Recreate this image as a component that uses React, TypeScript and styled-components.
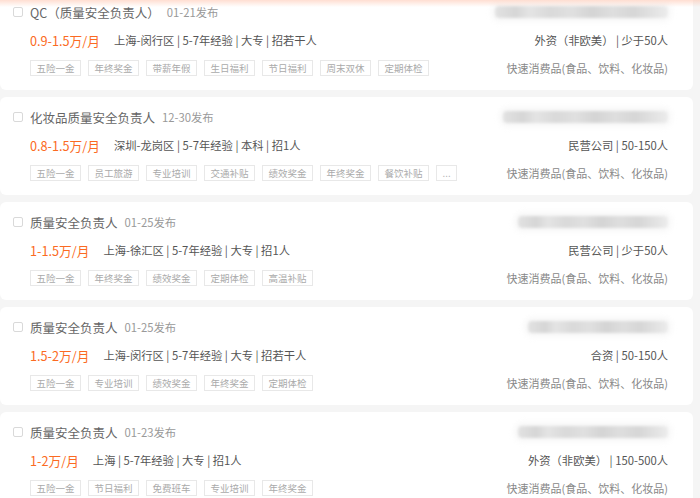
import React from "react";
import styled, { createGlobalStyle } from "styled-components";

const Global = createGlobalStyle`
  html, body { margin: 0; padding: 0; background: #f5f5f5; }
  body { font-family: "Noto Sans CJK SC", "Noto Sans", sans-serif; overflow: hidden; }
`;

const Page = styled.div`
  position: relative;
  width: 700px;
  height: 498px;
  overflow: hidden;
  background: #f5f5f5;
`;

const TopGlow = styled.div`
  position: absolute;
  left: 0;
  right: 0;
  top: 0;
  height: 7px;
  background: linear-gradient(to bottom, rgba(255, 190, 165, 0.5), rgba(255, 220, 205, 0));
  pointer-events: none;
  z-index: 2;
`;

const List = styled.div`
  display: flex;
  flex-direction: column;
  gap: 7px;
  margin-top: -8px;
  padding-right: 7px;
`;

const Card = styled.div`
  height: 98px;
  box-sizing: border-box;
  background: #fff;
  border-radius: 6px;
  padding: 6px 25px 8px 13px;
  display: flex;
  justify-content: space-between;
`;

const Left = styled.div`
  display: flex;
  flex-direction: column;
`;

const Right = styled.div`
  display: flex;
  flex-direction: column;
  align-items: flex-end;
`;

const Row = styled.div<{ $indent?: boolean }>`
  height: 28px;
  display: flex;
  align-items: center;
  padding-left: ${(p) => (p.$indent ? "17px" : "0")};
  white-space: nowrap;
`;

const Check = styled.span`
  width: 10px;
  height: 10px;
  box-sizing: border-box;
  border: 1px solid #d9d9d9;
  border-radius: 2px;
  margin-right: 7px;
  flex: none;
`;

const Title = styled.span`
  font-size: 12.5px;
  color: #666;
`;

const DateText = styled.span`
  font-size: 11.3px;
  color: #999;
  margin-left: 7px;
`;

const Salary = styled.span`
  font-size: 12.7px;
  color: #fb6a22;
  margin-right: 14px;
`;

const Info = styled.span`
  font-size: 11.3px;
  color: #555;
`;

const Tags = styled.div`
  display: flex;
  gap: 7px;
`;

const Tag = styled.span`
  height: 16px;
  box-sizing: border-box;
  padding: 0 5.5px;
  border: 1px solid #e8e8e8;
  font-size: 9.5px;
  line-height: 14px;
  color: #aaa;
  display: inline-flex;
  align-items: center;
`;

const Blur = styled.div<{ $w: number }>`
  width: ${(p) => p.$w}px;
  height: 12px;
  border-radius: 4px;
  background: linear-gradient(
    to right,
    #e2e2e2 0%,
    #d6d6d6 12%,
    #e4e4e4 20%,
    #d9d9d9 32%,
    #e0e0e0 44%,
    #d4d4d4 56%,
    #dedede 68%,
    #d6d6d6 80%,
    #e3e3e3 92%,
    #ececec 100%
  );
  filter: blur(1.5px);
  box-shadow: 0 0 6px 4px #f8f8f8;
`;

const Company = styled.span`
  font-size: 11.3px;
  color: #555;
`;

const Industry = styled.span`
  font-size: 11px;
  color: #888;
`;

type Job = {
  title: string;
  date: string;
  salary: string;
  info: string;
  tags: string[];
  blur: number;
  company: string;
  industry: string;
};

const jobs: Job[] = [
  {
    title: "QC（质量安全负责人）",
    date: "01-21发布",
    salary: "0.9-1.5万/月",
    info: "上海-闵行区 | 5-7年经验 | 大专 | 招若干人",
    tags: ["五险一金", "年终奖金", "带薪年假", "生日福利", "节日福利", "周末双休", "定期体检"],
    blur: 173,
    company: "外资（非欧美） | 少于50人",
    industry: "快速消费品(食品、饮料、化妆品)",
  },
  {
    title: "化妆品质量安全负责人",
    date: "12-30发布",
    salary: "0.8-1.5万/月",
    info: "深圳-龙岗区 | 5-7年经验 | 本科 | 招1人",
    tags: ["五险一金", "员工旅游", "专业培训", "交通补贴", "绩效奖金", "年终奖金", "餐饮补贴", "..."],
    blur: 165,
    company: "民营公司 | 50-150人",
    industry: "快速消费品(食品、饮料、化妆品)",
  },
  {
    title: "质量安全负责人",
    date: "01-25发布",
    salary: "1-1.5万/月",
    info: "上海-徐汇区 | 5-7年经验 | 大专 | 招1人",
    tags: ["五险一金", "年终奖金", "绩效奖金", "定期体检", "高温补贴"],
    blur: 150,
    company: "民营公司 | 少于50人",
    industry: "快速消费品(食品、饮料、化妆品)",
  },
  {
    title: "质量安全负责人",
    date: "01-25发布",
    salary: "1.5-2万/月",
    info: "上海-闵行区 | 5-7年经验 | 大专 | 招若干人",
    tags: ["五险一金", "专业培训", "绩效奖金", "年终奖金", "定期体检"],
    blur: 140,
    company: "合资 | 50-150人",
    industry: "快速消费品(食品、饮料、化妆品)",
  },
  {
    title: "质量安全负责人",
    date: "01-23发布",
    salary: "1-2万/月",
    info: "上海 | 5-7年经验 | 大专 | 招1人",
    tags: ["五险一金", "节日福利", "免费班车", "专业培训", "年终奖金"],
    blur: 150,
    company: "外资（非欧美） | 150-500人",
    industry: "快速消费品(食品、饮料、化妆品)",
  },
];

export default function App() {
  return (
    <Page>
      <Global />
      <TopGlow />
      <List>
        {jobs.map((j, i) => (
          <Card key={i}>
            <Left>
              <Row>
                <Check />
                <Title>{j.title}</Title>
                <DateText>{j.date}</DateText>
              </Row>
              <Row $indent>
                <Salary>{j.salary}</Salary>
                <Info>{j.info}</Info>
              </Row>
              <Row $indent>
                <Tags>
                  {j.tags.map((t) => (
                    <Tag key={t}>{t}</Tag>
                  ))}
                </Tags>
              </Row>
            </Left>
            <Right>
              <Row>
                <Blur $w={j.blur} />
              </Row>
              <Row>
                <Company>{j.company}</Company>
              </Row>
              <Row>
                <Industry>{j.industry}</Industry>
              </Row>
            </Right>
          </Card>
        ))}
      </List>
    </Page>
  );
}
